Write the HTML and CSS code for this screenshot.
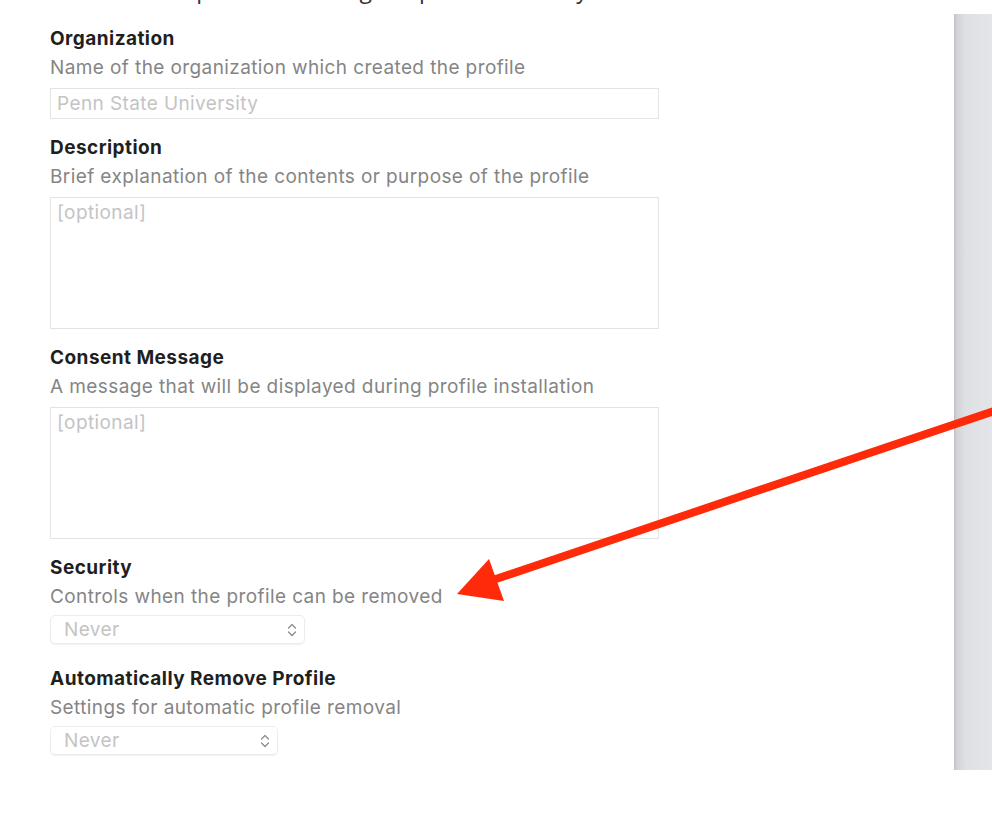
FILE: index.html
```html
<!DOCTYPE html>
<html lang="en">
<head>
    <meta charset="UTF-8">
    <meta name="viewport" content="width=device-width, initial-scale=1.0">
    <title>Profile General Settings</title>
    <link rel="stylesheet" href="styles.css">
</head>
<body>
<div class="page">
    <div class="content">
        <div class="lead">
            <p>Set these fields up before loading the profile correctly</p>
        </div>

        <form class="settings">
            <div class="field">
                <div class="field-label">Organization</div>
                <div class="field-hint">Name of the organization which created the profile</div>
                <div class="text-input">Penn State University</div>
            </div>

            <div class="field">
                <div class="field-label">Description</div>
                <div class="field-hint">Brief explanation of the contents or purpose of the profile</div>
                <div class="text-area">[optional]</div>
            </div>

            <div class="field">
                <div class="field-label">Consent Message</div>
                <div class="field-hint">A message that will be displayed during profile installation</div>
                <div class="text-area">[optional]</div>
            </div>

            <div class="field field-select">
                <div class="field-label">Security</div>
                <div class="field-hint">Controls when the profile can be removed</div>
                <div class="popup popup-wide">
                    <span>Never</span>
                    <svg class="chevrons" width="10" height="16" viewBox="0 0 10 16">
                        <path d="M1.5 6 L5 2.5 L8.5 6" />
                        <path d="M1.5 10 L5 13.5 L8.5 10" />
                    </svg>
                </div>
            </div>

            <div class="field field-select">
                <div class="field-label">Automatically Remove Profile</div>
                <div class="field-hint">Settings for automatic profile removal</div>
                <div class="popup popup-narrow">
                    <span>Never</span>
                    <svg class="chevrons" width="10" height="16" viewBox="0 0 10 16">
                        <path d="M1.5 6 L5 2.5 L8.5 6" />
                        <path d="M1.5 10 L5 13.5 L8.5 10" />
                    </svg>
                </div>
            </div>
        </form>
    </div>

    <div class="side-panel"></div>

    <!-- annotation arrow drawn over the screenshot -->
    <svg class="annotation" width="992" height="816" viewBox="0 0 992 816">
        <line x1="1000" y1="409" x2="490" y2="581" />
        <polygon points="457,594 489,559 504,601" />
    </svg>
</div>
</body>
</html>
```

FILE: styles.css
```css
body {
    margin: 0;
    background-color: #ffffff;
    font-family: Inter, "Liberation Sans", Arial, sans-serif;
}
.page {
    position: relative;
    display: flex;
    width: 992px;
    height: 816px;
    overflow: hidden;
}
.content {
    flex: 1;
}
.lead {
    height: 6px;
    overflow: hidden;
    padding-left: 14px;
}
.lead p {
    margin: -24px 0 0 0;
    font-family: "Open Sans", sans-serif;
    font-size: 23px;
    line-height: 26px;
    color: #333333;
    white-space: nowrap;
}
.settings {
    display: flex;
    flex-direction: column;
    padding: 18px 0 0 50px;
    width: 609px;
}
.field {
    display: flex;
    flex-direction: column;
    align-items: flex-start;
    margin-bottom: 14px;
}
.field-label {
    font-size: 19px;
    font-weight: 700;
    letter-spacing: 0.45px;
    line-height: 29px;
    color: #1f1f1f;
}
.field-hint {
    font-size: 19px;
    letter-spacing: 0.4px;
    line-height: 29px;
    color: #858585;
}
.text-input,
.text-area {
    box-sizing: border-box;
    width: 609px;
    margin-top: 6px;
    padding: 4px 6px;
    border: 1px solid #e3e3e3;
    font-size: 19px;
    letter-spacing: 0.4px;
    line-height: 22px;
    color: #c4c4c4;
}
.text-input {
    height: 31px;
}
.text-area {
    height: 132px;
}
.field-select {
    margin-bottom: 20px;
}
.popup {
    box-sizing: border-box;
    display: flex;
    align-items: center;
    justify-content: space-between;
    height: 29px;
    margin-top: 4px;
    padding: 0 7px 0 13px;
    border: 1px solid #ececec;
    border-radius: 5px;
    box-shadow: 0 1px 1px rgba(0, 0, 0, 0.06);
    font-size: 19px;
    letter-spacing: 0.4px;
    color: #c4c4c4;
}
.popup-wide {
    width: 255px;
}
.popup-narrow {
    width: 228px;
}
.chevrons path {
    fill: none;
    stroke: #8c8c8c;
    stroke-width: 1.3;
    stroke-linecap: round;
    stroke-linejoin: round;
}
.side-panel {
    width: 38px;
    height: 756px;
    margin-top: 14px;
    background: linear-gradient(to right, #bfc0c3 0, #d3d4d7 3px, #dfe0e3 12px, #e4e5e8 100%);
}
.annotation {
    position: absolute;
    left: 0;
    top: 0;
    pointer-events: none;
}
.annotation line {
    stroke: #ff2a0a;
    stroke-width: 8;
}
.annotation polygon {
    fill: #ff2a0a;
}
```
